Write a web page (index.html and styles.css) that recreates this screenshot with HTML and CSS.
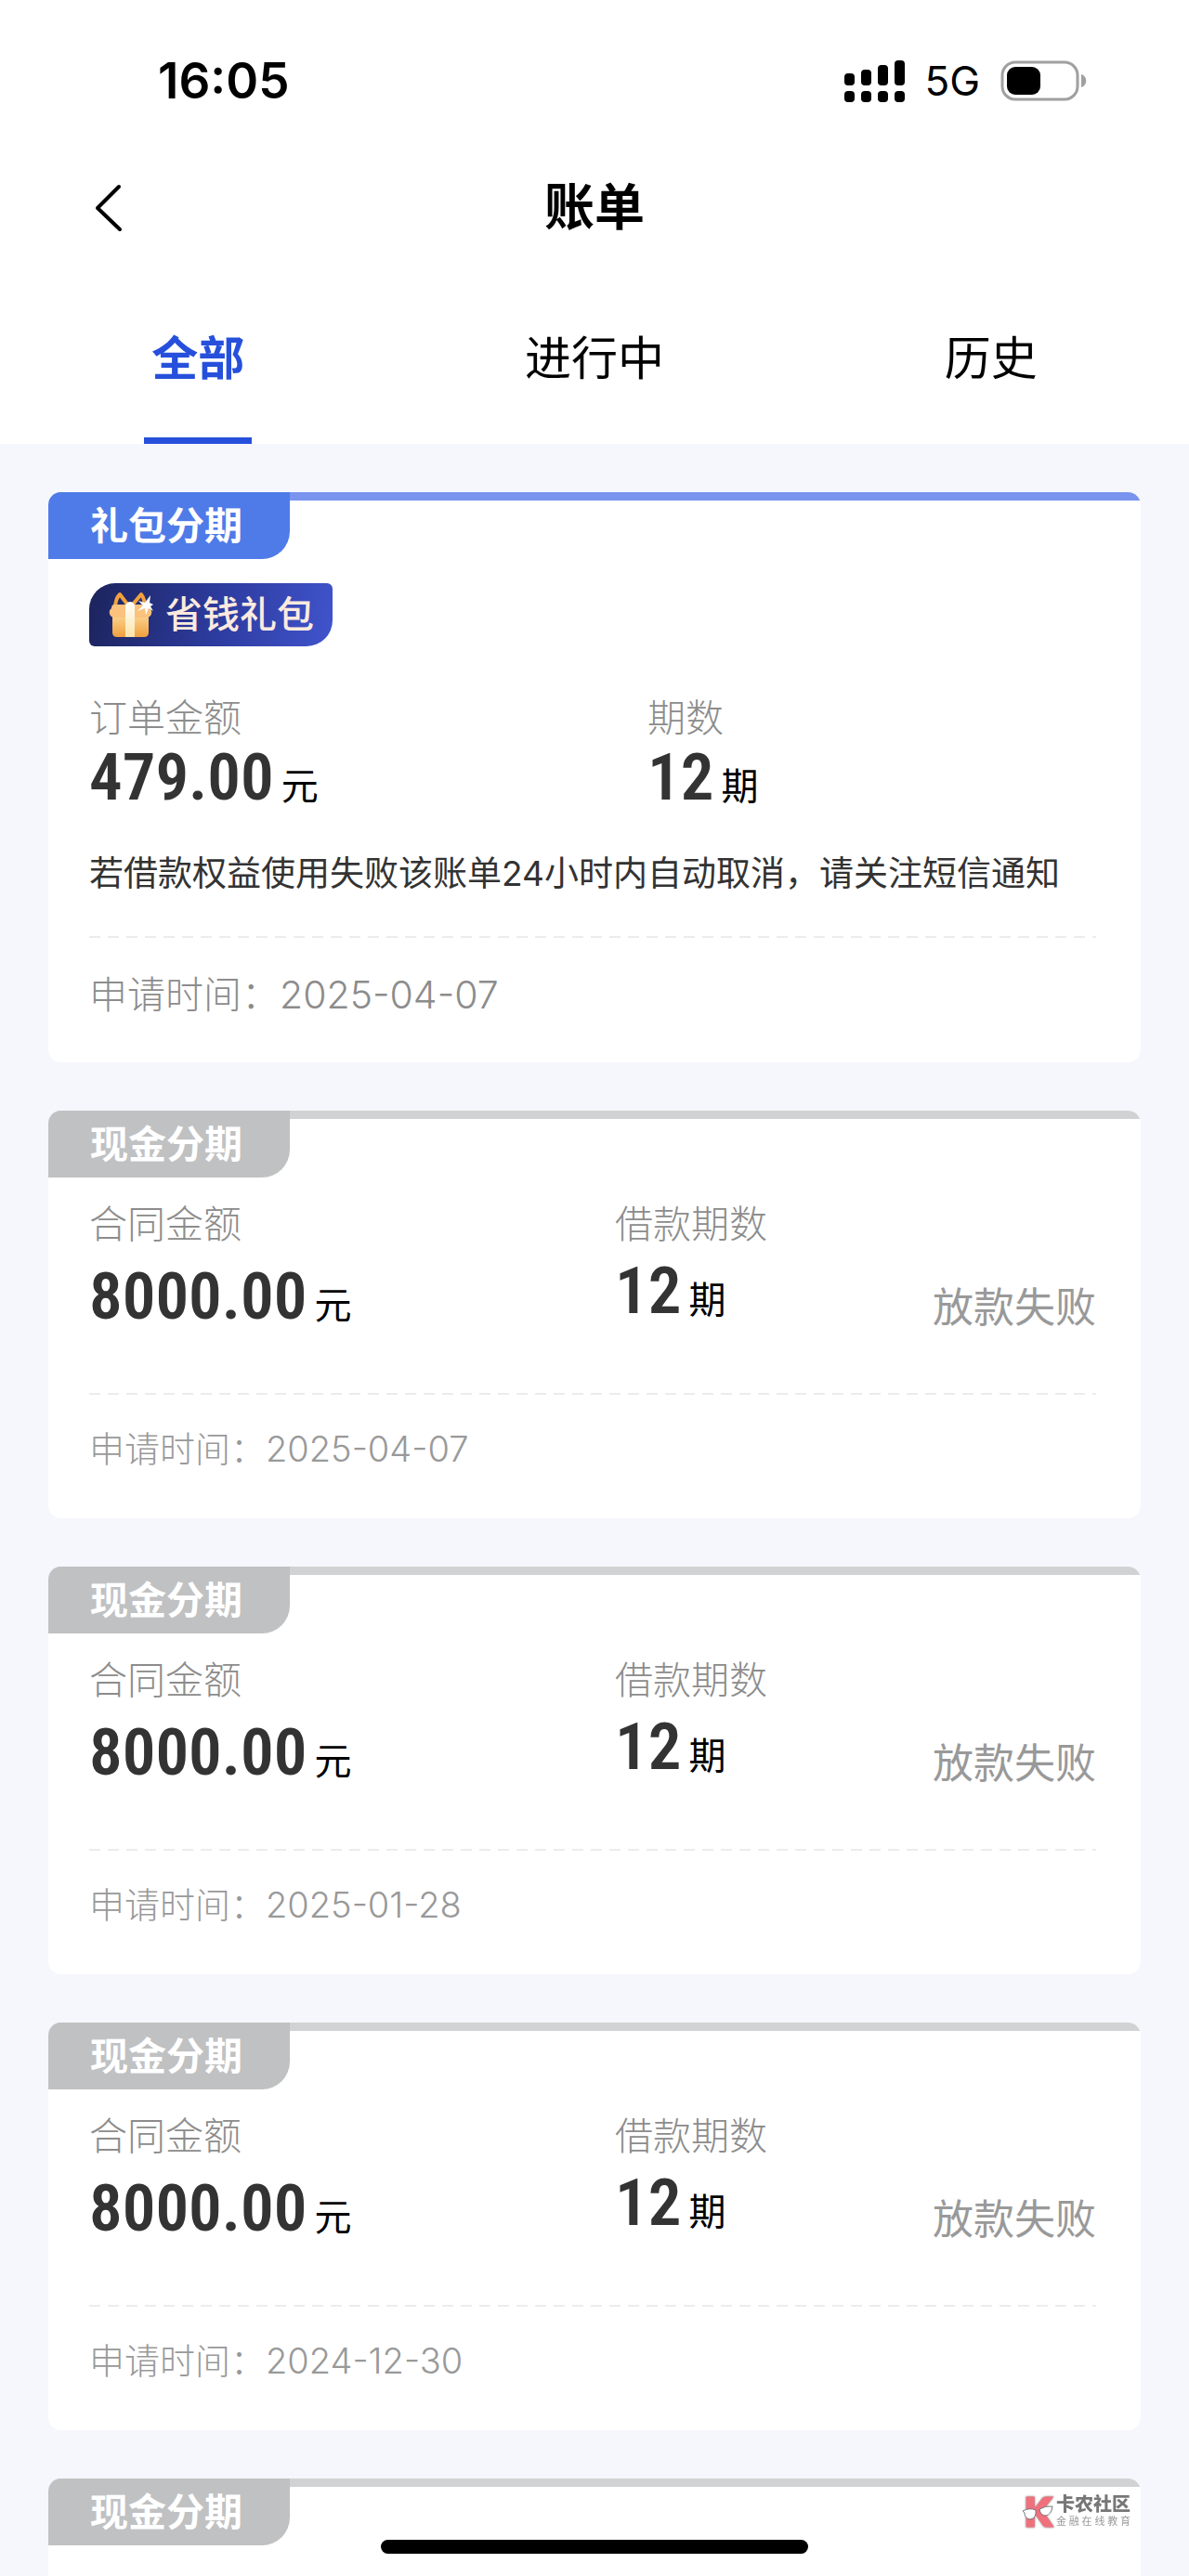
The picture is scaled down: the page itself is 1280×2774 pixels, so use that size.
FILE: index.html
```html
<!DOCTYPE html>
<html lang="zh-CN">
<head>
  <meta charset="UTF-8" />
  <meta name="viewport" content="width=device-width, initial-scale=1" />
  <title>账单</title>
  <link rel="stylesheet" href="styles.css">
</head>
<body>

  <header class="top">
    <div class="status-bar">
      <span class="clock">16:05</span>
      <div class="status-right">
        <svg class="signal" width="65" height="46" viewBox="0 0 65 46" aria-hidden="true">
          <rect x="0" y="15" width="11" height="13" rx="4" />
          <rect x="18" y="11" width="11" height="17" rx="4" />
          <rect x="36" y="6" width="11" height="22" rx="4" />
          <rect x="54" y="1" width="11" height="27" rx="4" />
          <rect x="0" y="34" width="11" height="12" rx="4" />
          <rect x="18" y="34" width="11" height="12" rx="4" />
          <rect x="36" y="34" width="11" height="12" rx="4" />
          <rect x="54" y="34" width="11" height="12" rx="4" />
        </svg>
        <span class="network">5G</span>
        <svg class="battery" width="93" height="44" viewBox="0 0 93 44" aria-hidden="true">
          <rect x="2" y="2" width="81" height="40" rx="14" fill="none" stroke="#a0a0a0" stroke-width="3" />
          <rect x="7" y="7" width="36" height="30" rx="9" />
          <path d="M87 15c7 2 7 12 0 14z" fill="#a0a0a0" />
        </svg>
      </div>
    </div>

    <div class="title-bar">
      <button class="back" aria-label="返回">
        <svg width="30" height="52" viewBox="0 0 30 52" aria-hidden="true">
          <path d="M26 3L3 26l24 23" fill="none" stroke="#000" stroke-width="4" stroke-linecap="round" stroke-linejoin="round" />
        </svg>
      </button>
      <h1>账单</h1>
    </div>

    <nav class="tabs">
      <button class="tab active">全部</button>
      <button class="tab">进行中</button>
      <button class="tab">历史</button>
    </nav>
  </header>

  <main class="bills">

    <!-- gift pack order -->
    <section class="card card-gift">
      <h2 class="ribbon">礼包分期</h2>
      <div class="card-body">
        <div class="badge">
          <svg width="50" height="50" viewBox="0 0 50 50" aria-hidden="true">
            <defs>
              <linearGradient id="box" x1="0" y1="0" x2="0" y2="1">
                <stop offset="0" stop-color="#fbd08a" />
                <stop offset="1" stop-color="#f0a03e" />
              </linearGradient>
              <linearGradient id="band" x1="0" y1="0" x2="0" y2="1">
                <stop offset="0" stop-color="#fff" />
                <stop offset="1" stop-color="#fbe4a8" />
              </linearGradient>
            </defs>
            <path d="M22 15L13 3Q8 8 8 18M26 15L36 3Q40 8 40 18" fill="none" stroke="#f2a23c" stroke-width="4" stroke-linejoin="round" />
            <path d="M5 27h39v17q0 5-5 5H10q-5 0-5-5z" fill="url(#box)" />
            <path d="M7 14h35q3 0 3 4 3 2 2 6-1 4-6 4H8q-5 0-6-4-1-4 2-6 0-4 3-4z" fill="#fac27c" />
            <path d="M19 49V17q0-6 5-6t5 6v32z" fill="url(#band)" />
            <path d="M46 4l-1 8 4 2-3 2 3 5-5-3-3 7-1-7-8 3 6-6-5-5 7 2z" fill="#fff" />
          </svg>
          <span>省钱礼包</span>
        </div>
        <div class="figures">
          <div class="figure">
            <span class="label">订单金额</span>
            <p class="value"><strong>479.00</strong>元</p>
          </div>
          <div class="figure">
            <span class="label">期数</span>
            <p class="value"><strong>12</strong>期</p>
          </div>
        </div>
        <p class="notice">若借款权益使用失败该账单24小时内自动取消，请关注短信通知</p>
        <p class="applied">申请时间：2025-04-07</p>
      </div>
    </section>

    <!-- cash loans -->
    <section class="card card-cash">
      <h2 class="ribbon">现金分期</h2>
      <div class="card-body">
        <div class="figures">
          <div class="figure">
            <span class="label">合同金额</span>
            <p class="value"><strong>8000.00</strong>元</p>
          </div>
          <div class="figure">
            <span class="label">借款期数</span>
            <p class="value"><strong>12</strong>期</p>
          </div>
          <span class="state">放款失败</span>
        </div>
        <p class="applied">申请时间：2025-04-07</p>
      </div>
    </section>

    <section class="card card-cash">
      <h2 class="ribbon">现金分期</h2>
      <div class="card-body">
        <div class="figures">
          <div class="figure">
            <span class="label">合同金额</span>
            <p class="value"><strong>8000.00</strong>元</p>
          </div>
          <div class="figure">
            <span class="label">借款期数</span>
            <p class="value"><strong>12</strong>期</p>
          </div>
          <span class="state">放款失败</span>
        </div>
        <p class="applied">申请时间：2025-01-28</p>
      </div>
    </section>

    <section class="card card-cash">
      <h2 class="ribbon">现金分期</h2>
      <div class="card-body">
        <div class="figures">
          <div class="figure">
            <span class="label">合同金额</span>
            <p class="value"><strong>8000.00</strong>元</p>
          </div>
          <div class="figure">
            <span class="label">借款期数</span>
            <p class="value"><strong>12</strong>期</p>
          </div>
          <span class="state">放款失败</span>
        </div>
        <p class="applied">申请时间：2024-12-30</p>
      </div>
    </section>

    <section class="card card-cash card-last">
      <h2 class="ribbon">现金分期</h2>
    </section>
  </main>

  <div class="watermark">
    <svg width="34" height="36" viewBox="0 0 34 36" aria-hidden="true">
      <text class="mark" x="3" y="33">K</text>
      <path d="M1 17q7-4 14-1 1 9-6 10-6-1-6-7zM19 15q7-4 14-3-1 9-7 10-6 0-7-7z" fill="#fff" stroke="#777" />
    </svg>
    <div class="watermark-text">
      <b>卡农社区</b>
      <small>金融在线教育</small>
    </div>
  </div>
  <div class="home-bar"></div>

</body>
</html>
```

FILE: styles.css
```css
* {
  box-sizing: border-box;
}

body {
  margin: 0;
  min-height: 100vh;
  display: flex;
  flex-direction: column;
  background: #f5f7fc;
  color: #000;
  font-family: Inter, "Noto Sans CJK SC", sans-serif;
}

h1, h2, p {
  margin: 0;
}

button {
  padding: 0;
  border: none;
  background: none;
  color: inherit;
  font-family: inherit;
  cursor: pointer;
}

.top {
  background: #fff;
}

/* status bar */
.status-bar {
  height: 174px;
  padding: 0 110px 0 170px;
  display: flex;
  align-items: center;
  justify-content: space-between;
}

.clock {
  font-size: 53px;
  font-weight: 600;
}

.status-right {
  display: flex;
  align-items: center;
}

.network {
  margin: 0 22px 0 21px;
  font-size: 44px;
}

/* title */
.title-bar {
  height: 100px;
  padding: 0 102px;
  display: grid;
  grid-template-columns: 1fr auto 1fr;
  align-items: center;
}

.back {
  display: flex;
  justify-self: start;
}

.title-bar h1 {
  font-size: 54px;
  font-weight: 700;
  line-height: 80px;
}

/* tabs */
.tabs {
  height: 204px;
  display: grid;
  grid-template-columns: repeat(3, 1fr);
  justify-items: center;
}

.tab {
  padding: 18px 8px 0;
  border-bottom: 7px solid transparent;
  font-size: 50px;
}

.tab.active {
  border-color: #2650dc;
  color: #2650dc;
  font-weight: 700;
}

/* cards */
.bills {
  flex: 1;
  padding: 52px 52px 0;
  display: flex;
  flex-direction: column;
  gap: 52px;
}

.card {
  border-radius: 14px;
  overflow: hidden;
  background: linear-gradient(#d1d2d3, #d1d2d3) top / 100% 9px no-repeat #fff;
}

.card-gift {
  background-image: linear-gradient(#7994ee, #7994ee);
}

.card-last {
  flex: 1;
  min-height: 104px;
  border-radius: 14px 14px 0 0;
}

.ribbon {
  width: 260px;
  padding-left: 45px;
  border-bottom-right-radius: 30px;
  background: #c0c1c2;
  color: #fff;
  font-size: 41px;
  font-weight: 700;
  line-height: 72px;
}

.card-gift .ribbon {
  background: #4f7be8;
}

.card-body {
  padding: 22px 48px 47px 44px;
}

.card-gift .card-body {
  padding: 26px 48px 45px 44px;
}

.badge {
  width: 262px;
  height: 68px;
  margin-bottom: 49px;
  padding-left: 20px;
  display: flex;
  align-items: center;
  gap: 12px;
  border-radius: 28px 6px 28px 6px;
  background: linear-gradient(100deg, #1c245c, #2c3a9c 50%, #4054cc);
  color: #fdeadf;
  font-size: 40px;
  font-weight: 500;
  line-height: 68px;
  white-space: nowrap;
}

.figures {
  display: grid;
  grid-template-columns: 566fr 342fr auto;
}

.card-gift .figures {
  grid-template-columns: 601fr 483fr;
}

.label {
  display: block;
  color: #8c8c8c;
  font-size: 41px;
  font-weight: 300;
  line-height: 56px;
}

.value {
  height: 72px;
  font-size: 40px;
  line-height: 72px;
}

.value strong {
  margin-right: 8px;
  color: #333;
  font-family: "Roboto Condensed", Roboto, sans-serif;
  font-size: 71px;
  font-weight: 600;
}

.card-cash .value {
  margin-top: 8px;
}

.card-cash .figure:first-child .value {
  margin-top: 14px;
}

.state {
  align-self: end;
  color: #999;
  font-size: 44px;
  line-height: 48px;
}

.notice {
  margin-top: 42px;
  color: #333;
  font-size: 37px;
  line-height: 52px;
}

.applied {
  margin-top: 68px;
  padding-top: 32px;
  background: repeating-linear-gradient(90deg, #ececec 0 12px, #fff 12px 20px) top / 100% 2px no-repeat;
  color: #999;
  font-size: 38px;
  font-weight: 300;
  line-height: 56px;
}

.card-gift .applied {
  margin-top: 41px;
  padding-top: 35px;
  color: #8c8c8c;
  font-size: 41px;
}

/* overlays */
.watermark {
  position: fixed;
  right: 63px;
  bottom: 51px;
  display: flex;
  align-items: center;
  gap: 3px;
  color: #777;
}

.watermark svg {
  overflow: visible;
}

.mark {
  fill: #f0707c;
  stroke: #f0707c;
  stroke-width: 3px;
  filter: drop-shadow(0 0 1px #777);
  font-family: Lato, sans-serif;
  font-size: 41px;
  font-weight: 900;
}

.watermark-text {
  width: 80px;
}

.watermark-text b,
.watermark-text small {
  display: block;
  text-align-last: justify;
}

.watermark-text b {
  font-size: 20px;
  font-weight: 900;
  line-height: 20px;
}

.watermark-text small {
  color: #999;
  font-size: 11px;
  line-height: 16px;
}

.home-bar {
  position: fixed;
  bottom: 24px;
  left: 50%;
  width: 460px;
  height: 15px;
  border-radius: 8px;
  background: #000;
  transform: translateX(-50%);
}
```
